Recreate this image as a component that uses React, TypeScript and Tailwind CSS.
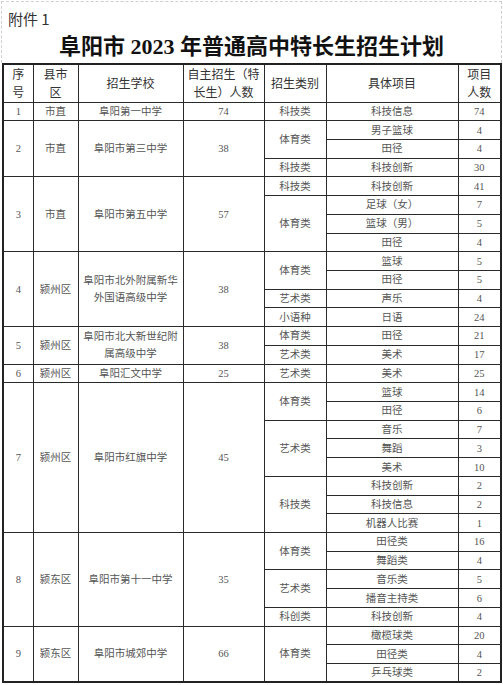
import React from "react";

type Cat = { name: string; items: [string, number][] };
type School = { no: number; area: string; name: string[]; total: number; cats: Cat[] };

const schools: School[] = [
  { no: 1, area: "市直", name: ["阜阳第一中学"], total: 74, cats: [{ name: "科技类", items: [["科技信息", 74]] }] },
  {
    no: 2, area: "市直", name: ["阜阳市第三中学"], total: 38,
    cats: [
      { name: "体育类", items: [["男子篮球", 4], ["田径", 4]] },
      { name: "科技类", items: [["科技创新", 30]] },
    ],
  },
  {
    no: 3, area: "市直", name: ["阜阳市第五中学"], total: 57,
    cats: [
      { name: "科技类", items: [["科技创新", 41]] },
      { name: "体育类", items: [["足球（女）", 7], ["篮球（男）", 5], ["田径", 4]] },
    ],
  },
  {
    no: 4, area: "颍州区", name: ["阜阳市北外附属新华", "外国语高级中学"], total: 38,
    cats: [
      { name: "体育类", items: [["篮球", 5], ["田径", 5]] },
      { name: "艺术类", items: [["声乐", 4]] },
      { name: "小语种", items: [["日语", 24]] },
    ],
  },
  {
    no: 5, area: "颍州区", name: ["阜阳市北大新世纪附", "属高级中学"], total: 38,
    cats: [
      { name: "体育类", items: [["田径", 21]] },
      { name: "艺术类", items: [["美术", 17]] },
    ],
  },
  { no: 6, area: "颍州区", name: ["阜阳汇文中学"], total: 25, cats: [{ name: "艺术类", items: [["美术", 25]] }] },
  {
    no: 7, area: "颍州区", name: ["阜阳市红旗中学"], total: 45,
    cats: [
      { name: "体育类", items: [["篮球", 14], ["田径", 6]] },
      { name: "艺术类", items: [["音乐", 7], ["舞蹈", 3], ["美术", 10]] },
      { name: "科技类", items: [["科技创新", 2], ["科技信息", 2], ["机器人比赛", 1]] },
    ],
  },
  {
    no: 8, area: "颍东区", name: ["阜阳市第十一中学"], total: 35,
    cats: [
      { name: "体育类", items: [["田径类", 16], ["舞蹈类", 4]] },
      { name: "艺术类", items: [["音乐类", 5], ["播音主持类", 6]] },
      { name: "科创类", items: [["科技创新", 4]] },
    ],
  },
  {
    no: 9, area: "颍东区", name: ["阜阳市城郊中学"], total: 66,
    cats: [{ name: "体育类", items: [["橄榄球类", 20], ["田径类", 4], ["乒乓球类", 2]] }],
  },
];

const cell = "border border-[#2a2a2a] text-center align-middle p-0";
const body = cell + " h-[18.72px] text-[10.5px] leading-[13px] text-[#555]";

function SchoolRows({ s }: { s: School }) {
  const span = s.cats.reduce((n, c) => n + c.items.length, 0);
  const rows: React.ReactNode[] = [];
  let first = true;
  s.cats.forEach((c, ci) => {
    c.items.forEach(([item, n], ii) => {
      rows.push(
        <tr key={`${ci}-${ii}`}>
          {first && (
            <>
              <td rowSpan={span} className={body}>{s.no}</td>
              <td rowSpan={span} className={body}>{s.area}</td>
              <td rowSpan={span} className={body + " leading-[17px]"}>
                {s.name.map((l) => (
                  <div key={l}>{l}</div>
                ))}
              </td>
              <td rowSpan={span} className={body}>{s.total}</td>
            </>
          )}
          {ii === 0 && (
            <td rowSpan={c.items.length} className={body}>{c.name}</td>
          )}
          <td className={body}>{item}</td>
          <td className={body}>{n}</td>
        </tr>
      );
      first = false;
    });
  });
  return <>{rows}</>;
}

export default function App() {
  return (
    <div className="w-[503px] h-[685px] bg-white overflow-hidden">
      <div className="h-[62px] mt-[1px] mx-[1px] border-t border-l border-r border-dashed border-[#cfcfcf]">
        <div className="pl-[6px] pt-[8px] text-[15px] leading-[17px] text-[#333] font-['Noto_Sans_CJK_SC',sans-serif]">
          附件 1
        </div>
        <div className="mt-[6px] text-center text-[22px] leading-[28px] font-bold text-[#111] font-['Liberation_Serif','Noto_Sans_CJK_SC',serif]">
          阜阳市 2023 年普通高中特长生招生计划
        </div>
      </div>
      <table className="ml-[2px] w-[498px] table-fixed border-collapse border-2 border-[#222] font-['Liberation_Serif','Noto_Sans_CJK_SC',serif]">
        <colgroup>
          <col className="w-[30px]" />
          <col className="w-[45px]" />
          <col className="w-[105px]" />
          <col className="w-[81px]" />
          <col className="w-[62px]" />
          <col className="w-[132px]" />
          <col className="w-[43px]" />
        </colgroup>
        <thead className="font-['Noto_Sans_CJK_SC',sans-serif] text-[12px] leading-[18px] text-[#333]">
          <tr>
            <th className={cell + " h-[38px] font-normal"}>序<br />号</th>
            <th className={cell + " font-normal"}>县市<br />区</th>
            <th className={cell + " font-normal"}>招生学校</th>
            <th className={cell + " font-normal"}>自主招生（特<br />长生）人数</th>
            <th className={cell + " font-normal"}>招生类别</th>
            <th className={cell + " font-normal"}>具体项目</th>
            <th className={cell + " font-normal"}>项目<br />人数</th>
          </tr>
        </thead>
        <tbody>
          {schools.map((s) => (
            <SchoolRows key={s.no} s={s} />
          ))}
        </tbody>
      </table>
    </div>
  );
}
